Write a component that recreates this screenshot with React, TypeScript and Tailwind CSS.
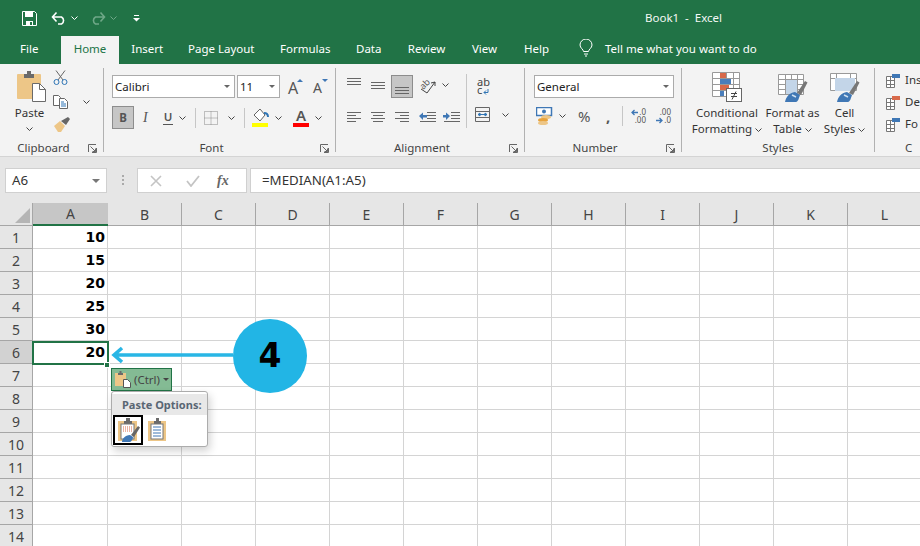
import * as React from "react";
import {FC, ReactNode} from "react";

const Chev: FC<{ className?: string, color?: string }> = ({className, color = "#444"}) => (
    <svg width="7" height="4" viewBox="0 0 7 4" className={className}>
        <path d="M.5.5 3.5 3.5 6.5.5" stroke={color} fill="none"/>
    </svg>
);

const Launcher = () => (
    <svg width="9" height="9" viewBox="0 0 9 9">
        <path d="M.5 8V.5H8M8.5 4v4.500H4M2.500 2.500l5 5M4.500 7.500h3v-3" stroke="#666" fill="none"/>
    </svg>
);

const Lines: FC<{ rows: [number, number][], y?: number[] }> = ({rows, y = [1, 4, 7, 10]}) => (
    <svg width="15" height="14" viewBox="0 0 15 14">
        {rows.map(([a, b], i) => <path key={i} d={`M${a} ${y[i] + .5}H${b}`} stroke="#666"/>)}
    </svg>
);

const Indent: FC<{ dir: "in" | "out" }> = ({dir}) => (
    <svg width="17" height="14" viewBox="0 0 17 14">
        <path d="M8 1.500h9M8 4.500h9M8 7.500h9M1 10.500h16" stroke="#666"/>
        {dir === "out"
            ? <path d="M0 5 4 1.500v2.500h4v2.500H4v2.500z" fill="#3f77b5"/>
            : <path d="M7 5 3 1.500v2.500H0v2.500h3v2.500z" fill="#3f77b5"/>}
    </svg>
);

const Vsep: FC<{ h: string, ml: string, mr: string }> = ({h, ml, mr}) => (
    <div className={`w-px bg-[#c6c6c6] ${h} ${ml} ${mr}`}/>
);

const Group: FC<{ w: string, label: string, launcher?: boolean, children: ReactNode }> = ({w, label, launcher, children}) => (
    <div className={`${w} flex h-[84px] shrink-0 flex-col border-r border-[#b1b1b1]`}>
        <div className="h-[72px]">{children}</div>
        <div className="flex h-3 items-start text-[#444]">
            <div className="flex-1 text-center leading-4">{label}</div>
            {launcher && <div className="flex h-4 w-4 items-center justify-start pl-[1px] pt-[1px]"><Launcher/></div>}
        </div>
    </div>
);

const Combo: FC<{ w: string, text: string, ml?: string }> = ({w, text, ml = ""}) => (
    <div className={`${w} ${ml} flex h-[23px] items-center justify-between border border-[#ababab] bg-white pl-[2px] pr-[4px] text-[#222]`}>
        <span>{text}</span>
        <span className="h-0 w-0 border-x-[3.5px] border-t-[3.5px] border-x-transparent border-t-[#666]"/>
    </div>
);

const TitleBar = () => (
    <div className="flex h-[36px] items-center pl-[22px] text-white">
        <svg width="15" height="15" viewBox="0 0 15 15">
            <path d="M.5.500h12l2 2v12H.500z" fill="#217346" stroke="#fff"/>
            <path d="M3 1h8v5H3zM4 10h7v4H4z" fill="#fff"/>
            <path d="M8 11h2v3H8z" fill="#217346"/>
        </svg>
        <svg width="16" height="14" viewBox="0 0 16 14" className="ml-[14px]">
            <path d="M2 6h8.500a4 4 0 0 1 0 7H7M5.500 1.500 1.500 6l4 4.500" stroke="#fff" strokeWidth="1.600" fill="none"/>
        </svg>
        <Chev className="ml-[4px]" color="#fff"/>
        <svg width="16" height="14" viewBox="0 0 16 14" className="ml-[12px]">
            <path d="M14 6H5.500a4 4 0 0 0 0 7H9M10.500 1.500l4 4.500-4 4.500" stroke="#6fa888" strokeWidth="1.600" fill="none"/>
        </svg>
        <Chev className="ml-[4px]" color="#6fa888"/>
        <svg width="7" height="7" viewBox="0 0 7 7" className="ml-[16px]">
            <path d="M1 .5h5" stroke="#fff"/>
            <path d="M0 3h7L3.500 6.500z" fill="#fff"/>
        </svg>
        <div className="ml-[505px] whitespace-pre text-[#f4f8f5]">Book1  -  Excel</div>
    </div>
);

const tabs: [string, string][] = [
    ["Insert", "w-[56.5px]"],
    ["Page Layout", "w-[91.5px]"],
    ["Formulas", "w-[76.5px]"],
    ["Data", "w-[50.5px]"],
    ["Review", "w-[65px]"],
    ["View", "w-[51px]"],
    ["Help", "w-[53px]"],
];

const TabBar = () => (
    <div className="flex h-[28px] text-white">
        <div className="w-[61px] pl-[20px] pt-[4px]">File</div>
        <div className="w-[58px] bg-[#f3f3f3] pt-[4px] text-center text-[#217346]">Home</div>
        {tabs.map(([name, w]) => <div key={name} className={`${w} pt-[4px] text-center`}>{name}</div>)}
        <svg width="14" height="18" viewBox="0 0 14 18" className="ml-[16px] mt-[3px]">
            <path d="M4.500 12.500c0-2-3.500-3.500-3.500-6.500a6 6 0 0 1 12 0c0 3-3.500 4.500-3.500 6.500zM5 15h4M6 17h2" stroke="#fff" fill="none"/>
        </svg>
        <div className="ml-[12px] pt-[4px]">Tell me what you want to do</div>
    </div>
);

const ClipboardGroup = () => (
    <Group w="w-[104px]" label="Clipboard" launcher>
        <div className="flex">
            <div className="flex w-[53px] flex-col items-center pl-[6px]">
                <svg width="29" height="32" viewBox="0 0 29 32" className="ml-[3px] mt-[2px]">
                    <rect x="0" y="4" width="24" height="25" rx="1" fill="#edc687"/>
                    <path d="M7 4h3V1h4v3h3v4H7z" fill="#6a6a6a"/>
                    <path d="M15.500 13.500h7l6 6v12h-13z" fill="#fff" stroke="#6a6a6a"/>
                    <path d="M22.500 13.500v6h6" fill="none" stroke="#6a6a6a"/>
                </svg>
                <div className="mt-[3px] leading-4 text-[#333]">Paste</div>
                <Chev className="mt-[6px]"/>
            </div>
            <div className="mt-[2px] flex flex-col">
                <svg width="15" height="15" viewBox="0 0 15 15">
                    <path d="M3 .5 10 10M12 .5 5 10" stroke="#666" fill="none"/>
                    <circle cx="3.500" cy="12" r="2.500" fill="none" stroke="#2f75b5"/>
                    <circle cx="11.500" cy="12" r="2.500" fill="none" stroke="#2f75b5"/>
                </svg>
                <div className="mt-[10px] flex items-center">
                    <svg width="15" height="14" viewBox="0 0 15 14">
                        <path d="M.5.500h5l2 2v8h-7z" fill="#fff" stroke="#666"/>
                        <path d="M6.500 3.500h5l3 3v7h-8z" fill="#fff" stroke="#666"/>
                        <path d="M8 7h3M8 9h5M8 11h5" stroke="#2f75b5"/>
                    </svg>
                    <Chev className="ml-[15px]"/>
                </div>
                <svg width="17" height="15" viewBox="0 0 17 15" className="mt-[8px]">
                    <path d="M1 9 7 4l5 5-4 6H5z" fill="#edc687"/>
                    <path d="M8 4 15 0l2 2-4 6z" fill="#666"/>
                </svg>
            </div>
        </div>
    </Group>
);

const FontGroup = () => (
    <Group w="w-[232px]" label="Font" launcher>
        <div className="flex items-center pl-[8px] pt-[7px]">
            <Combo w="w-[123px]" text="Calibri"/>
            <Combo w="w-[43px]" ml="ml-[2px]" text="11"/>
            <div className="relative ml-[8px] flex h-[23px] w-[13px] items-end text-[16px] leading-5 text-[#555]">
                A
                <span className="absolute right-[-2px] top-[4px] h-0 w-0 border-x-[3px] border-b-[3px] border-x-transparent border-b-[#3f77b5]"/>
            </div>
            <div className="relative ml-[12px] flex h-[23px] w-[12px] items-end text-[14px] leading-5 text-[#555]">
                A
                <span className="absolute right-[-3px] top-[4px] h-0 w-0 border-x-[3px] border-t-[3px] border-x-transparent border-t-[#3f77b5]"/>
            </div>
        </div>
        <div className="mt-[8px] flex items-center pl-[8px] text-[#555]">
            <div className="flex h-[23px] w-[22px] items-center justify-center border border-[#8d8d8d] bg-[#c6c6c6] font-bold">B</div>
            <span className="ml-[9px] w-[9px] font-['Liberation_Serif',serif] text-[14px] italic">I</span>
            <span className="ml-[11px] w-[10px] border-b border-[#555] text-center font-semibold leading-[14px]">U</span>
            <Chev className="ml-[6px]"/>
            <Vsep h="h-[20px]" ml="ml-[9px]" mr="mr-[8px]"/>
            <svg width="14" height="14" viewBox="0 0 14 14">
                <path d="M.5.500h13v13H.500zM7 .5v13M.5 7h13" stroke="#888" strokeDasharray="1 1" fill="none"/>
            </svg>
            <Chev className="ml-[10px]"/>
            <Vsep h="h-[20px]" ml="ml-[9px]" mr="mr-[7px]"/>
            <svg width="17" height="19" viewBox="0 0 17 19">
                <path d="M2 7 8 1l5 6-5 6z" fill="#fff" stroke="#666"/>
                <path d="M12 5c3 0 4 2 4 4" stroke="#2f75b5" strokeWidth="2" fill="none"/>
                <rect y="15" width="16" height="4" fill="#ffff00"/>
            </svg>
            <Chev className="ml-[6px]"/>
            <div className="ml-[11px] flex w-[16px] flex-col items-center">
                <span className="h-[15px] text-[15px] font-semibold leading-[15px]">A</span>
                <span className="h-[4px] w-[16px] bg-[#ff0000]"/>
            </div>
            <Chev className="ml-[6px]"/>
        </div>
    </Group>
);

const AlignmentGroup = () => (
    <Group w="w-[189px]" label="Alignment" launcher>
        <div className="flex">
            <div className="flex flex-col pl-[11px]">
                <div className="flex h-[30px] items-start pt-[7px]">
                    <div className="w-[24px] pt-[2px]"><Lines rows={[[0, 14], [0, 14], [0, 14]]} y={[1, 4, 7]}/></div>
                    <div className="w-[20px] pt-[5px]"><Lines rows={[[0, 14], [0, 14], [0, 14]]} y={[2, 5, 8]}/></div>
                    <div className="flex h-[23px] w-[22px] items-end justify-center border border-[#8d8d8d] bg-[#c6c6c6] pb-[1px]">
                        <Lines rows={[[0, 14], [0, 14], [0, 14]]} y={[5, 8, 11]}/>
                    </div>
                    <svg width="18" height="17" viewBox="0 0 18 17" className="ml-[6px] mt-[2px] overflow-visible">
                        <text x="1" y="11" transform="rotate(-45 5 8)" fontSize="9" fill="#555" fontFamily="Noto Sans, sans-serif">ab</text>
                        <path d="M2 12 8 16 16 5M16 5l-4 1M16 5v4" stroke="#444" fill="none"/>
                    </svg>
                    <Chev className="ml-[5px] mt-[8px]"/>
                </div>
                <div className="mt-[13px] flex items-start">
                    <div className="w-[24px]"><Lines rows={[[0, 14], [0, 9], [0, 14], [0, 9]]}/></div>
                    <div className="w-[24px]"><Lines rows={[[0, 14], [2, 12], [0, 14], [2, 12]]}/></div>
                    <div className="w-[24px]"><Lines rows={[[0, 14], [5, 14], [0, 14], [5, 14]]}/></div>
                    <div className="w-[24px]"><Indent dir="out"/></div>
                    <Indent dir="in"/>
                </div>
            </div>
            <Vsep h="h-[54px] mt-[6px]" ml="ml-[6px]" mr="mr-[8px]"/>
            <div className="flex flex-col">
                <svg width="17" height="31" viewBox="0 0 17 31" className="mt-[8px] overflow-visible">
                    <text x="2" y="10" fontSize="11" fill="#444" fontFamily="Noto Sans, sans-serif">ab</text>
                    <text x="2" y="18" fontSize="11" fill="#444" fontFamily="Noto Sans, sans-serif">c</text>
                    <path d="M13 13v3.500H9M11 14.500l-2 2 2 2" stroke="#2f75b5" fill="none"/>
                </svg>
                <div className="flex items-center">
                    <svg width="15" height="15" viewBox="0 0 15 15">
                        <path d="M.5.500h14v14H.500zM.5 4.500h14M.5 10.500h14" stroke="#666" fill="none"/>
                        <path d="M3 7.500h9M3 7.500l2-1.500v3zM12 7.500 10 6v3z" stroke="#2f75b5" fill="none"/>
                    </svg>
                    <Chev className="ml-[12px]"/>
                </div>
            </div>
        </div>
    </Group>
);

const NumberGroup = () => (
    <Group w="w-[157px]" label="Number" launcher>
        <div className="pl-[9px] pt-[7px]"><Combo w="w-[140px]" text="General"/></div>
        <div className="mt-[8px] flex items-center pl-[11px] text-[#555]">
            <svg width="17" height="18" viewBox="0 0 17 18">
                <rect x=".5" y=".5" width="15" height="8" fill="#fff" stroke="#3f77b5" strokeWidth="1.500"/>
                <circle cx="8" cy="4.500" r="2" fill="#3f77b5"/>
                <ellipse cx="10" cy="10" rx="5" ry="2" fill="#edc687"/>
                <ellipse cx="7" cy="13" rx="5" ry="2" fill="#e8a33d"/>
                <ellipse cx="7" cy="16" rx="5" ry="2" fill="#edc687"/>
            </svg>
            <Chev className="ml-[6px]"/>
            <span className="ml-[12px] w-[13px] text-[15px] leading-4">%</span>
            <span className="ml-[15px] w-[6px] text-[15px] font-bold leading-3">,</span>
            <Vsep h="h-[20px]" ml="ml-[10px]" mr="mr-[7px]"/>
            <svg width="15" height="16" viewBox="0 0 15 16" className="ml-[1px] overflow-visible">
                <text x="15" y="7" textAnchor="end" fontSize="8" fill="#555" fontFamily="Noto Sans, sans-serif">.0</text>
                <text x="15" y="15" textAnchor="end" fontSize="8" fill="#555" fontFamily="Noto Sans, sans-serif">.00</text>
                <path d="M7 4.500H1M3.500 2 1 4.500 3.500 7" stroke="#3f77b5" strokeWidth="1.300" fill="none"/>
            </svg>
            <svg width="16" height="16" viewBox="0 0 16 16" className="ml-[9px] overflow-visible">
                <text x="16" y="7" textAnchor="end" fontSize="8" fill="#555" fontFamily="Noto Sans, sans-serif">.00</text>
                <text x="16" y="15" textAnchor="end" fontSize="8" fill="#555" fontFamily="Noto Sans, sans-serif">.0</text>
                <path d="M1 12.500h6M4.500 10 7 12.500 4.500 15" stroke="#3f77b5" strokeWidth="1.300" fill="none"/>
            </svg>
        </div>
    </Group>
);

const GridIcon: FC<{ children: ReactNode, w?: number }> = ({children, w = 30}) => (
    <svg width={w} height="30" viewBox={`0 0 ${w} 30`}>{children}</svg>
);

const StyleItem: FC<{ w: string, top: string, bottom: string, icon: ReactNode }> = ({w, top, bottom, icon}) => (
    <div className={`${w} flex flex-col items-center text-[#333]`}>
        <div className="mt-[4px] h-[30px]">{icon}</div>
        <div className="mt-[3px] leading-4 whitespace-nowrap">{top}</div>
        <div className="flex items-center leading-4 whitespace-nowrap">{bottom}<Chev className="ml-[3px] mt-[1px]"/></div>
    </div>
);

const Brush = () => (
    <>
        <path d="M19 21 27 9l2.500 1.500L23 23z" fill="#777"/>
        <path d="M7 30c1-5 4-9 10-10l5 3c-1 3-2 7-4 7z" fill="#3f77b5"/>
        <path d="M14 23l4 2" stroke="#cfe0f0" strokeWidth="1.500"/>
    </>
);

const StylesGroup = () => (
    <Group w="w-[193px]" label="Styles">
        <div className="flex pl-[7px]">
            <StyleItem w="w-[76px]" top="Conditional" bottom="Formatting" icon={
                <GridIcon>
                    <path d="M.5.500h27v24H.500zM.5 6.500h27M.5 12.500h27M.5 18.500h27M8.500.500v24M14.500.500v24M21.500.500v24" stroke="#999" fill="#fff"/>
                    <path d="M8 1h6v5H8z" fill="#d8694a"/>
                    <path d="M8 7h11v5H8z" fill="#4a7ebb"/>
                    <path d="M8 13h9v5H8z" fill="#d8694a"/>
                    <path d="M8 19h4v5H8z" fill="#4a7ebb"/>
                    <rect x="14.500" y="16.500" width="15" height="13" fill="#fff" stroke="#666"/>
                    <path d="M19 21.500h6M19 24.500h6M24 19.500l-4 8" stroke="#444"/>
                </GridIcon>
            }/>
            <StyleItem w="w-[55px]" top="Format as" bottom="Table" icon={
                <GridIcon>
                    <path d="M.5 2.500h25v20H.500zM.5 7.500h25M.5 12.500h25M.5 17.500h25M7.500 2.500v20M13.500 2.500v20M19.500 2.500v20" stroke="#999" fill="#fff"/>
                    <path d="M8 8h11v14H8z" fill="#c3d5e8"/>
                    <Brush/>
                </GridIcon>
            }/>
            <StyleItem w="w-[49px]" top="Cell" bottom="Styles" icon={
                <GridIcon>
                    <path d="M.5 1.500h26v17H.500zM.5 6.500h26M6.500 1.500v17M20.500 1.500v17" stroke="#999" fill="#fff"/>
                    <path d="M5 6h20v13H5z" fill="#c3d5e8"/>
                    <Brush/>
                </GridIcon>
            }/>
        </div>
    </Group>
);

const CellsGroup = () => (
    <div className="flex h-[84px] flex-1 flex-col overflow-hidden pl-[11px] text-[#333]">
        <div className="h-[72px] pt-[3px]">
            {[["Ins", "#3f77b5"], ["De", "#d8694a"], ["Fo", "#3f77b5"]].map(([t, c]) => (
                <div key={t} className="mb-[4px] flex h-[18px] items-center">
                    <svg width="15" height="15" viewBox="0 0 15 15" className="shrink-0">
                        <path d="M.5 3.500h8v11h-8zM.5 7.500h8M.5 11.500h8M4.500 3.500v11" stroke="#777" fill="#fff"/>
                        <path d="M6 1h8v4H6z" fill={c}/>
                    </svg>
                    <span className="ml-[4px]">{t}</span>
                </div>
            ))}
        </div>
        <div className="h-3 pl-[19px] leading-4 text-[#444]">C</div>
    </div>
);

const Ribbon = () => (
    <div className="flex h-[93px] items-start border-b border-[#d4d4d4] bg-[#f3f3f3] pt-[4px]">
        <ClipboardGroup/>
        <FontGroup/>
        <AlignmentGroup/>
        <NumberGroup/>
        <StylesGroup/>
        <CellsGroup/>
    </div>
);

const FormulaBar = () => (
    <div className="flex h-[46px] items-start bg-[#e6e6e6] pl-[5px] pt-[11px] text-[13.3px] text-[#333]">
        <div className="flex h-[25px] w-[102px] items-center justify-between border border-[#d0d0d0] bg-white pl-[6px] pr-[6px]">
            <span>A6</span>
            <span className="h-0 w-0 border-x-[4px] border-t-[4px] border-x-transparent border-t-[#777]"/>
        </div>
        <div className="ml-[15px] mt-[7px] flex w-[15px] flex-col gap-[2px]">
            <span className="h-[2px] w-[2px] bg-[#aaa]"/>
            <span className="h-[2px] w-[2px] bg-[#aaa]"/>
            <span className="h-[2px] w-[2px] bg-[#aaa]"/>
        </div>
        <div className="flex h-[25px] w-[110px] items-center border border-[#d0d0d0] bg-white pl-[12px]">
            <svg width="12" height="12" viewBox="0 0 12 12">
                <path d="M1 1l10 10M11 1 1 11" stroke="#c4c4c4" strokeWidth="1.600"/>
            </svg>
            <svg width="14" height="12" viewBox="0 0 14 12" className="ml-[24px]">
                <path d="M1 6l4 5 8-10" stroke="#c4c4c4" strokeWidth="1.800" fill="none"/>
            </svg>
            <span className="ml-[17px] font-['Liberation_Serif',serif] text-[14px] font-bold italic text-[#666]">fx</span>
        </div>
        <div className="ml-[3px] flex h-[25px] flex-1 items-center border-y border-l border-[#d0d0d0] bg-white pl-[11px]">=MEDIAN(A1:A5)</div>
    </div>
);

const cols = ["A", "B", "C", "D", "E", "F", "G", "H", "I", "J", "K", "L"];
const colWidth = (c: string) => c === "A" ? "w-[75px]" : "w-[74px]";
const values: Record<number, number> = {1: 10, 2: 15, 3: 20, 4: 25, 5: 30, 6: 20};
const rows = Array.from({length: 14}, (_, i) => i + 1);

const Sheet = () => (
    <div className="relative flex-1 overflow-hidden bg-white">
        <div className="flex h-[23px] bg-[#e6e6e6] text-[14px] text-[#444]">
            <div className="flex h-[23px] w-[33px] shrink-0 items-end justify-end border-b border-r border-[#a6a6a6] pb-[2px] pr-[2px]">
                <span className="h-0 w-0 border-b-[15px] border-l-[15px] border-b-[#b5b5b5] border-l-transparent"/>
            </div>
            {cols.map(c => (
                <div key={c}
                     className={`${colWidth(c)} flex h-[23px] shrink-0 items-center justify-center ${c === "A" ? "border-b-2 border-[#217346] bg-[#c6c6c6]" : "border-b border-r border-[#a6a6a6]"}`}>
                    {c}
                </div>
            ))}
        </div>
        {rows.map(r => (
            <div key={r} className="flex h-[23px]">
                <div className={`flex h-[23px] w-[33px] shrink-0 items-center justify-center border-b border-r border-[#a6a6a6] text-[14px] text-[#444] ${r === 6 ? "bg-[#d2d2d2]" : "bg-[#e6e6e6]"}`}>
                    {r}
                </div>
                {cols.map(c => (
                    <div key={c}
                         className={`${colWidth(c)} flex h-[23px] shrink-0 items-center justify-end border-b border-r border-[#d4d4d4] pr-[2px] font-['DejaVu_Sans',sans-serif] text-[14px] font-bold text-black`}>
                        {c === "A" ? values[r] : ""}
                    </div>
                ))}
            </div>
        ))}
        {/* selection + paste popup sit on top of the grid */}
        <div className="absolute left-[32px] top-[138px] h-[24px] w-[77px] border-2 border-[#217346]"/>
        <div className="absolute left-[104px] top-[159px] h-[6px] w-[6px] border border-white bg-[#217346]"/>
        <div className="absolute left-[111px] top-[165px] flex h-[23px] w-[61px] items-center border border-[#217346] bg-[#84bb94] pl-[3px] text-[#444]">
            <svg width="17" height="17" viewBox="0 0 17 17">
                <rect y="2" width="11" height="13" fill="#edc687"/>
                <path d="M3 2h1.500V0h2v2H8v2H3z" fill="#6a6a6a"/>
                <path d="M8.500 8.500h4l3 3v5h-7z" fill="#fff" stroke="#555"/>
            </svg>
            <span className="ml-[2px]">(Ctrl)</span>
            <span className="ml-[3px] h-0 w-0 border-x-[3px] border-t-[3px] border-x-transparent border-t-[#444]"/>
        </div>
        <div className="absolute left-[111px] top-[188px] h-[56px] w-[97px] rounded-[3px] border border-[#acacac] bg-white pt-[2px] shadow-[2px_4px_8px_rgba(0,0,0,0.18)]">
            <div className="h-[21px] bg-[#e8e8e8] pl-[10px] text-[11px] font-bold leading-[21px] text-[#596673]">Paste Options:</div>
            <div className="flex items-center pl-[1px]">
                <div className="flex h-[30px] w-[30px] items-center justify-center border-2 border-black">
                    <svg width="23" height="24" viewBox="0 0 23 24">
                        <rect x="1" y="3" width="19" height="20" fill="#edc687"/>
                        <path d="M7 3h2V0h4v3h2v3H7z" fill="#6a6a6a"/>
                        <rect x="4" y="6" width="13" height="15" fill="#fff" stroke="#777"/>
                        <path d="M6 9h9M6 11h9M6 13h9" stroke="#d8694a" strokeDasharray="1 1"/>
                        <path d="M14 17 21 8l2 1.500L17 19z" fill="#666"/>
                        <path d="M5 24c0-3 3-7 8-7l3 2c0 2-2 5-3 5z" fill="#3f77b5"/>
                    </svg>
                </div>
                <svg width="19" height="24" viewBox="0 0 19 24" className="ml-[5px]">
                    <rect y="3" width="18" height="20" fill="#edc687"/>
                    <path d="M6 3h2V0h3v3h2v3H6z" fill="#6a6a6a"/>
                    <rect x="3" y="6" width="12" height="15" fill="#fff" stroke="#777"/>
                    <path d="M5 9h8M5 12h8M5 15h8M5 18h8" stroke="#3f77b5"/>
                </svg>
            </div>
        </div>
        <svg width="125" height="18" viewBox="0 0 125 18" className="absolute left-[111px] top-[143px]">
            <path d="M122 9H4M11 2 3 9l8 7" stroke="#29b6e5" strokeWidth="3.500" fill="none"/>
        </svg>
        <div className="absolute left-[233px] top-[116px] flex h-[74px] w-[74px] items-center justify-center rounded-full bg-[#22b5e5] font-['DejaVu_Sans',sans-serif] text-[33px] font-bold text-black">
            4
        </div>
    </div>
);

export default function App() {
    return (
        <div className="flex h-[546px] w-[920px] flex-col overflow-hidden font-['Noto_Sans',sans-serif] text-[11.5px]">
            <div className="bg-[#217346]">
                <TitleBar/>
                <TabBar/>
            </div>
            <Ribbon/>
            <FormulaBar/>
            <Sheet/>
        </div>
    );
}
